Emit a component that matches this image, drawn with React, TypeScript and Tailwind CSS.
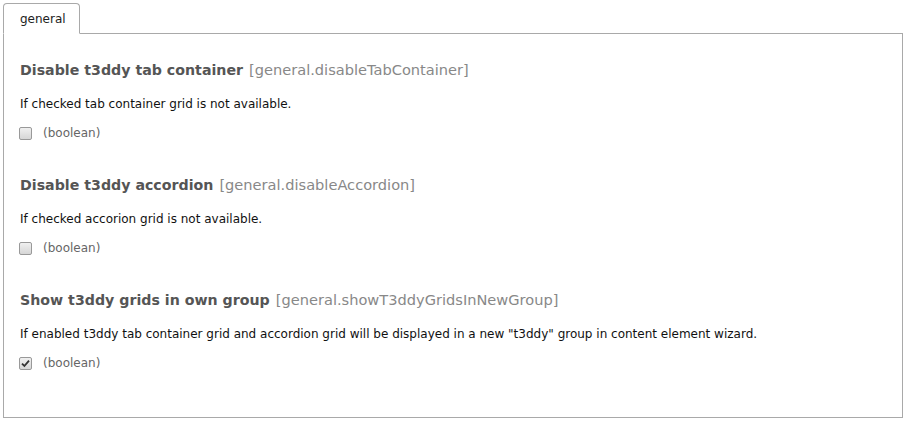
const settings = [
  {
    title: 'Disable t3ddy tab container',
    key: 'general.disableTabContainer',
    description: 'If checked tab container grid is not available.',
    checked: false,
  },
  {
    title: 'Disable t3ddy accordion',
    key: 'general.disableAccordion',
    description: 'If checked accorion grid is not available.',
    checked: false,
  },
  {
    title: 'Show t3ddy grids in own group',
    key: 'general.showT3ddyGridsInNewGroup',
    description:
      'If enabled t3ddy tab container grid and accordion grid will be displayed in a new "t3ddy" group in content element wizard.',
    checked: true,
  },
]

// Classic grey windows-style checkbox
const Checkbox = ({ checked }: { checked: boolean }) => (
  <span className="flex h-[13px] w-[13px] items-center justify-center rounded-[2px] border border-[#999] bg-gradient-to-b from-[#f0f0f0] to-[#d6d6d6]">
    {checked && (
      <svg width="9" height="9" viewBox="0 0 9 9">
        <path d="M1 4.6 L3.4 7 L8 1.6" fill="none" stroke="#333" strokeWidth="1.8" />
      </svg>
    )}
  </span>
)

export default function App() {
  return (
    <div className="min-h-[421px] bg-white pl-[3px] pt-[3px] font-['DejaVu_Sans',Verdana,sans-serif] text-[12px]">
      <div className="relative z-10 -mb-px flex h-[31px] w-[77px] items-center rounded-t-[4px] border border-b-white border-[#a9a9a9] bg-white pl-[16px] text-[#222]">
        general
      </div>
      <div className="h-[385px] w-[900px] border border-[#a9a9a9] px-[16px] pt-[26px]">
        {settings.map(setting => (
          <div key={setting.key} className="mb-[34px] flex flex-col">
            <div className="flex h-[20px] items-baseline leading-[20px]">
              <span className="text-[14.2px] font-bold text-[#555]">{setting.title}</span>
              <span className="ml-[6px] text-[14.6px] text-[#888]">[{setting.key}]</span>
            </div>
            <div className="mt-[16px] h-[16px] leading-[16px] text-[#111]">{setting.description}</div>
            <div className="mt-[13px] flex h-[16px] items-center">
              <span className="ml-[-1px]">
                <Checkbox checked={setting.checked} />
              </span>
              <span className="ml-[11px] leading-[16px] text-[#666]">(boolean)</span>
            </div>
          </div>
        ))}
      </div>
    </div>
  )
}
